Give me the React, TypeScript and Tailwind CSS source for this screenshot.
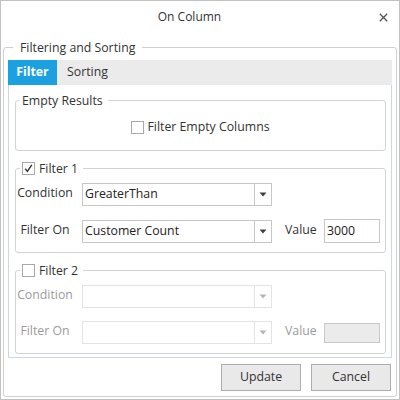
import React from "react";

function Check({ checked = false, disabled = false }: { checked?: boolean; disabled?: boolean }) {
  return (
    <span
      className={
        "inline-flex w-[13px] h-[13px] shrink-0 items-center justify-center border bg-white " +
        (disabled ? "border-[#c8c8c8]" : "border-[#a9a9a9]")
      }
    >
      {checked && (
        <svg width="11" height="11" viewBox="0 0 11 11">
          <path d="M2.2 5.8 L4.4 8.4 L8.8 1.8" fill="none" stroke="#333" strokeWidth="1.4" />
        </svg>
      )}
    </span>
  );
}

function Select({ value, disabled = false }: { value?: string; disabled?: boolean }) {
  return (
    <div
      className={
        "w-[190px] h-[23px] flex border bg-white " +
        (disabled ? "border-[#e3e3e3]" : "border-[#c6c6c6]")
      }
    >
      <div className="flex-1 flex items-center pl-[2px] text-[#222] whitespace-nowrap overflow-hidden">
        {value}
      </div>
      <div
        className={
          "w-[17px] flex items-center justify-center border-l " +
          (disabled ? "border-[#e3e3e3]" : "border-[#c6c6c6]")
        }
      >
        <svg width="8" height="5" viewBox="0 0 8 5">
          <path d="M0.5 0.5 L7.5 0.5 L4 4.5 Z" fill={disabled ? "#b5b5b5" : "#404040"} />
        </svg>
      </div>
    </div>
  );
}

function Label({ text, disabled }: { text: string; disabled?: boolean }) {
  return (
    <div
      className={
        "w-[58px] flex justify-center whitespace-nowrap " +
        (disabled ? "text-[#9b9b9b]" : "text-[#333]")
      }
    >
      <span className="shrink-0 -mt-[2px]">{text}</span>
    </div>
  );
}

function FilterGroup({
  title,
  checked,
  disabled,
  condition,
  filterOn,
  value,
}: {
  title: string;
  checked: boolean;
  disabled: boolean;
  condition?: string;
  filterOn?: string;
  value?: string;
}) {
  return (
    <fieldset className="border border-[#d3d3d3] rounded-[3px] pt-[6px] pb-[9px]">
      <legend className="ml-[4px] pl-[2px] pr-[5px] leading-[17px] h-[17px] flex items-center gap-[4px]">
        <Check checked={checked} />
        <span className="text-[#333]">{title}</span>
      </legend>
      <div className="flex flex-col gap-[13px]">
        <div className="flex items-center gap-[8px]">
          <Label text="Condition" disabled={disabled} />
          <Select value={condition} disabled={disabled} />
        </div>
        <div className="flex items-center gap-[8px]">
          <Label text="Filter On" disabled={disabled} />
          <Select value={filterOn} disabled={disabled} />
          <div
            className={
              "ml-[5px] w-[31px] -mt-[2px] whitespace-nowrap " +
              (disabled ? "text-[#9b9b9b]" : "text-[#333]")
            }
          >
            Value
          </div>
          {disabled ? (
            <div className="w-[56px] h-[20px] border border-[#c9c9c9] bg-[#ebebeb]" />
          ) : (
            <div className="w-[56px] h-[24px] border border-[#c6c6c6] bg-white flex items-center pl-[2px] text-[#222]">
              {value}
            </div>
          )}
        </div>
      </div>
    </fieldset>
  );
}

export default function App() {
  return (
    <div className="w-[400px] h-[400px] border border-[#c2c2c2] bg-white flex flex-col font-['Open_Sans',sans-serif] text-[12.3px] text-[#333]">
      <div className="h-[32px] flex items-center shrink-0">
        <div className="flex-1 text-center text-[12px] text-[#333]">On Column</div>
        <div className="w-[10px] mr-[11px] flex items-center justify-center">
          <svg width="9" height="9" viewBox="0 0 9 9">
            <path d="M0.8 0.8 L8.2 8.2 M8.2 0.8 L0.8 8.2" stroke="#555" strokeWidth="1.3" />
          </svg>
        </div>
      </div>
      <fieldset className="mx-[2px] mt-[6px] mb-[2px] flex-1 min-h-0 border border-[#d0d0d0] rounded-[3px] px-[4px] pt-[4px] pb-[5px] flex flex-col">
        <legend className="ml-[5px] px-[7px] leading-[17px] text-[#333]">Filtering and Sorting</legend>
        <div className="h-[25px] bg-[#ebebeb] flex shrink-0">
          <div className="w-[49px] bg-[#1ba1e2] text-white font-bold flex items-center justify-center">
            Filter
          </div>
          <div className="px-[10px] flex items-center text-[#333]">Sorting</div>
        </div>
        <div className="flex-1 min-h-0 border border-t-0 border-[#c8d9ec] pt-[7px] pl-[6px] pr-[5px] flex flex-col gap-[9px]">
          <fieldset className="border border-[#d3d3d3] rounded-[3px]">
            <legend className="ml-[3px] pl-[3px] pr-[5px] leading-[17px] text-[#333]">Empty Results</legend>
            <div className="h-[41px] pb-[4px] flex items-center justify-center gap-[3px]">
              <Check />
              <span className="-mt-[1px]">Filter Empty Columns</span>
            </div>
          </fieldset>
          <FilterGroup
            title="Filter 1"
            checked={true}
            disabled={false}
            condition="GreaterThan"
            filterOn="Customer Count"
            value="3000"
          />
          <FilterGroup title="Filter 2" checked={false} disabled={true} />
        </div>
        <div className="mt-[6px] h-[27px] shrink-0 flex justify-end gap-[10px] mr-[1px]">
          <button className="w-[80px] h-[27px] bg-[#e9e9e9] border border-[#adadad] text-[#333]">
            Update
          </button>
          <button className="w-[80px] h-[27px] bg-[#e9e9e9] border border-[#adadad] text-[#333]">
            Cancel
          </button>
        </div>
      </fieldset>
    </div>
  );
}
